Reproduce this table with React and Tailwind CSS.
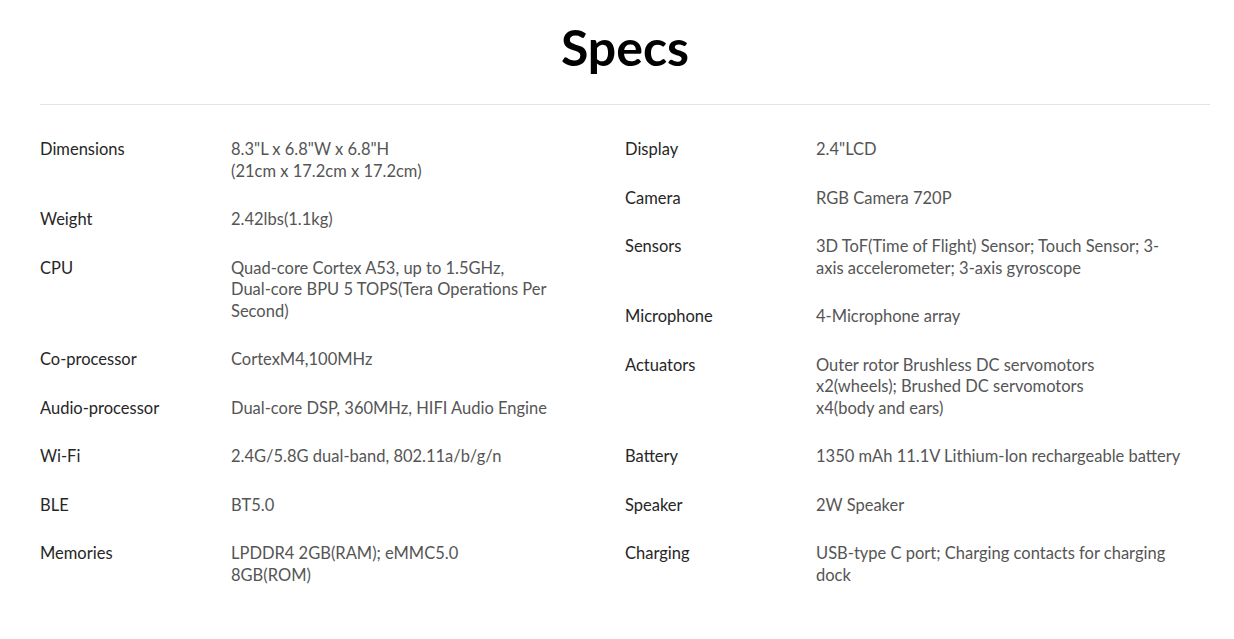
import React from 'react';

const left = [
  ['Dimensions', ['8.3"L x 6.8"W x 6.8"H', '(21cm x 17.2cm x 17.2cm)']],
  ['Weight', ['2.42lbs(1.1kg)']],
  ['CPU', ['Quad-core Cortex A53, up to 1.5GHz,', 'Dual-core BPU 5 TOPS(Tera Operations Per', 'Second)']],
  ['Co-processor', ['CortexM4,100MHz']],
  ['Audio-processor', ['Dual-core DSP, 360MHz, HIFI Audio Engine']],
  ['Wi-Fi', ['2.4G/5.8G dual-band, 802.11a/b/g/n']],
  ['BLE', ['BT5.0']],
  ['Memories', ['LPDDR4 2GB(RAM); eMMC5.0', '8GB(ROM)']],
];

const right = [
  ['Display', ['2.4"LCD']],
  ['Camera', ['RGB Camera 720P']],
  ['Sensors', ['3D ToF(Time of Flight) Sensor; Touch Sensor; 3-', 'axis accelerometer; 3-axis gyroscope']],
  ['Microphone', ['4-Microphone array']],
  ['Actuators', ['Outer rotor Brushless DC servomotors', 'x2(wheels); Brushed DC servomotors', 'x4(body and ears)']],
  ['Battery', ['1350 mAh 11.1V Lithium-Ion rechargeable battery']],
  ['Speaker', ['2W Speaker']],
  ['Charging', ['USB-type C port; Charging contacts for charging', 'dock']],
];

const SpecColumn = ({ rows }) => (
  <div className="flex flex-col gap-[27px]">
    {rows.map(([label, lines]) => (
      <div key={label} className="flex text-[16.5px] leading-[21.5px]">
        <div className="w-[191px] shrink-0 text-[#262626]">{label}</div>
        <div className="flex-1 text-[#555]">
          {lines.map((l, i) => (
            <div key={i}>{l}</div>
          ))}
        </div>
      </div>
    ))}
  </div>
);

export default function App() {
  return (
    <div className="min-h-[639px] bg-white pt-[19px]" style={{ fontFamily: 'Lato, "Open Sans", sans-serif' }}>
      <div className="ml-[40px] w-[1170px]">
        <h1 className="text-center text-[50px] font-bold leading-[56px] text-black">Specs</h1>
        <div className="mt-[29px] border-t border-[#e3e3e3]" />
        <div className="mt-[34px] grid grid-cols-2">
          <SpecColumn rows={left} />
          <SpecColumn rows={right} />
        </div>
      </div>
    </div>
  );
}
